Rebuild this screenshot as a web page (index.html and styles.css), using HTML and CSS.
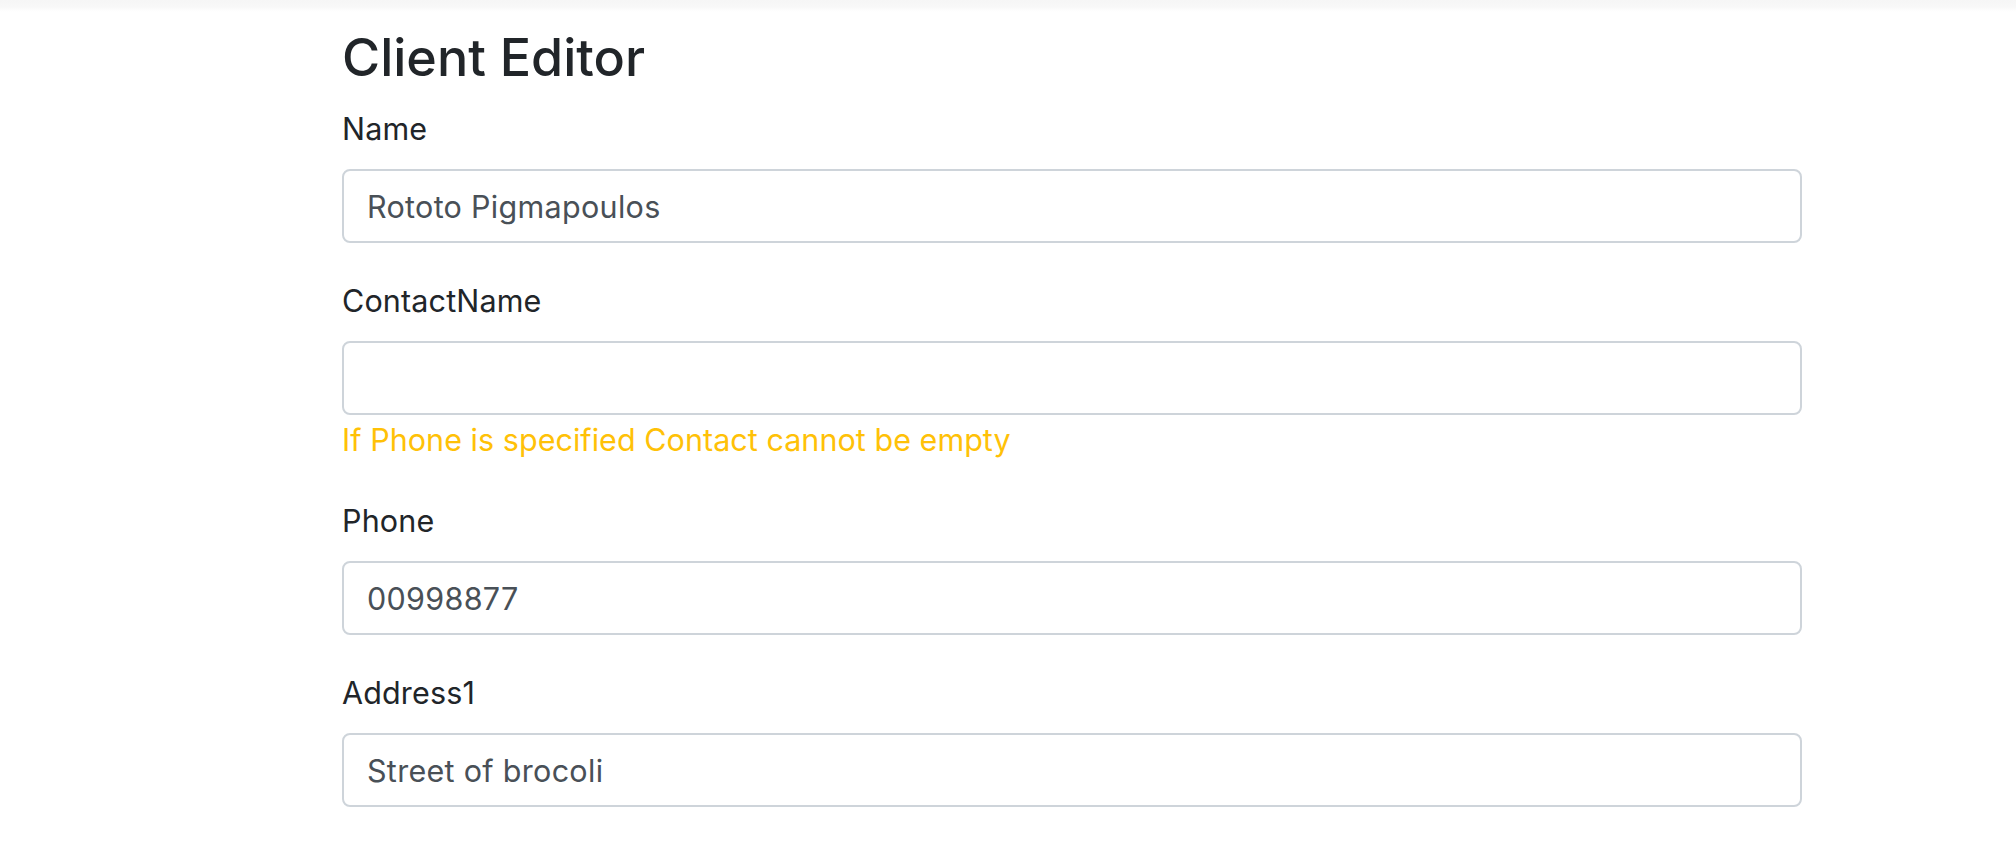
FILE: index.html
```html
<!DOCTYPE html>
<html lang="en">
<head>
<meta charset="utf-8">
<title>Client Editor</title>
<link rel="stylesheet" href="styles.css">
</head>
<body>
<div class="topbar"></div>
<main class="page">
  <h3 class="title">Client Editor</h3>
  <form class="form">
    <div class="form-group">
      <label class="label" for="name">Name</label>
      <input class="form-control" id="name" type="text" value="Rototo Pigmapoulos">
    </div>
    <div class="form-group">
      <label class="label" for="contact">ContactName</label>
      <input class="form-control" id="contact" type="text" value="">
      <div class="feedback">If Phone is specified Contact cannot be empty</div>
    </div>
    <div class="form-group">
      <label class="label" for="phone">Phone</label>
      <input class="form-control" id="phone" type="text" value="00998877">
    </div>
    <div class="form-group">
      <label class="label" for="address1">Address1</label>
      <input class="form-control" id="address1" type="text" value="Street of brocoli">
    </div>
  </form>
</main>
</body>
</html>
```
FILE: styles.css
```css
* { box-sizing: border-box; }
html, body {
  margin: 0;
  padding: 0;
  background: #fff;
  overflow: hidden;
}
body {
  font-family: Inter, "Liberation Sans", sans-serif;
  color: #212529;
}
.topbar {
  height: 12px;
  background: linear-gradient(#f6f6f6 0%, #f8f8f8 55%, #fdfdfd 85%, #fff 100%);
}
.page {
  width: 1460px;
  margin-left: 342px;
  padding-top: 15px;
}
.title {
  margin: 0 0 19px;
  font-size: 52px;
  line-height: 61px;
  font-weight: 500;
  color: #212529;
}
.form-group {
  display: flex;
  flex-direction: column;
  margin-bottom: 36px;
}
.label {
  font-size: 30.5px;
  letter-spacing: 0.15px;
  line-height: 44px;
  margin-bottom: 18px;
  color: #212529;
}
.form-control {
  display: block;
  width: 100%;
  height: 74px;
  padding: 0 23px;
  font-family: Inter, "Liberation Sans", sans-serif;
  font-size: 30.5px;
  letter-spacing: 0.3px;
  color: #495057;
  background: #fff;
  border: 2px solid #ced4da;
  border-radius: 8px;
  outline: none;
}
.feedback {
  margin-top: 2px;
  font-size: 30.5px;
  letter-spacing: 0.04px;
  line-height: 46px;
  color: #ffc107;
}
```
